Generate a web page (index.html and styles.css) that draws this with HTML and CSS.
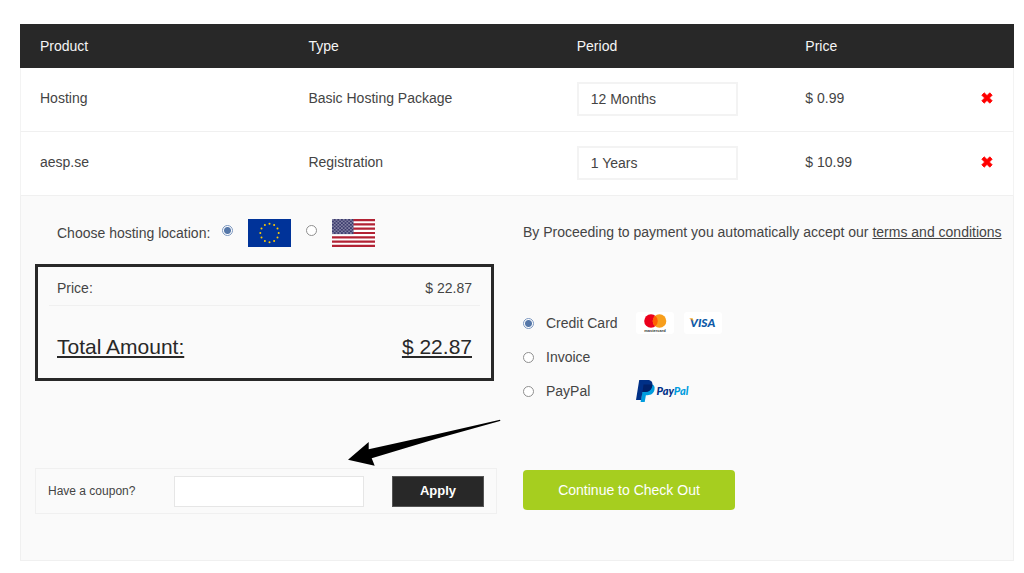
FILE: index.html
```html
<!DOCTYPE html>
<html lang="en">
<head>
  <meta charset="UTF-8">
  <meta name="viewport" content="width=device-width, initial-scale=1.0">
  <title>Shopping Cart</title>
  <link rel="stylesheet" href="styles.css">
</head>
<body>
  <svg class="defs" aria-hidden="true">
    <symbol id="icon-remove" viewBox="0 0 12 12">
      <path d="M3.2 .8 6 3.6 8.8 .8 11.2 3.2 8.4 6l2.8 2.8-2.4 2.4L6 8.4l-2.8 2.8L.8 8.8 3.6 6 .8 3.2z" fill="#f00" stroke="#f00" stroke-width=".8" stroke-linejoin="round"/>
    </symbol>
  </svg>

  <main class="cart">
    <table class="cart-table">
      <thead>
        <tr>
          <th class="col-product">Product</th>
          <th class="col-type">Type</th>
          <th class="col-period">Period</th>
          <th class="col-price">Price</th>
          <th class="col-remove"></th>
        </tr>
      </thead>
      <tbody>
        <tr>
          <td>Hosting</td>
          <td>Basic Hosting Package</td>
          <td><select class="period" aria-label="Hosting period"><option>12 Months</option></select></td>
          <td>$ 0.99</td>
          <td class="remove-cell"><button class="remove" type="button" aria-label="Remove Hosting"><svg><use href="#icon-remove"/></svg></button></td>
        </tr>
        <tr>
          <td>aesp.se</td>
          <td>Registration</td>
          <td><select class="period" aria-label="Registration period"><option>1 Years</option></select></td>
          <td>$ 10.99</td>
          <td class="remove-cell"><button class="remove" type="button" aria-label="Remove aesp.se"><svg><use href="#icon-remove"/></svg></button></td>
        </tr>
      </tbody>
    </table>

    <section class="checkout">
      <div class="location">
        <span>Choose hosting location:</span>
        <input type="radio" name="location" id="loc-eu" checked>
        <label for="loc-eu" aria-label="Europe">
          <svg class="flag" viewBox="0 0 43 28">
            <rect width="43" height="28" fill="#039"/>
            <g fill="#fc0">
              <circle cx="21.500" cy="4.800" r="1"/>
              <circle cx="26.100" cy="6" r="1"/>
              <circle cx="29.500" cy="9.400" r="1"/>
              <circle cx="30.700" cy="14" r="1"/>
              <circle cx="29.500" cy="18.600" r="1"/>
              <circle cx="26.100" cy="22" r="1"/>
              <circle cx="21.500" cy="23.200" r="1"/>
              <circle cx="16.900" cy="22" r="1"/>
              <circle cx="13.500" cy="18.600" r="1"/>
              <circle cx="12.300" cy="14" r="1"/>
              <circle cx="13.500" cy="9.400" r="1"/>
              <circle cx="16.900" cy="6" r="1"/>
            </g>
          </svg>
        </label>
        <input type="radio" name="location" id="loc-us">
        <label for="loc-us" aria-label="United States">
          <svg class="flag" viewBox="0 0 43 28">
            <defs>
              <pattern id="stars" width="3.600" height="3.300" patternUnits="userSpaceOnUse">
                <circle cx=".9" cy=".8" r=".6" fill="#fff"/>
                <circle cx="2.700" cy="2.450" r=".6" fill="#fff"/>
              </pattern>
            </defs>
            <rect width="43" height="28" fill="#fff"/>
            <path d="M0 1.080h43M0 5.390h43M0 9.690h43M0 14h43M0 18.310h43M0 22.620h43M0 26.920h43" stroke="#b22234" stroke-width="2.150"/>
            <rect width="21.500" height="15.100" fill="#3c3b6e"/>
            <rect width="21.500" height="15.100" fill="url(#stars)"/>
          </svg>
        </label>
      </div>

      <p class="terms">By Proceeding to payment you automatically accept our <a href="#">terms and conditions</a></p>

      <div class="summary">
        <div class="summary-row"><span>Price:</span><span>$ 22.87</span></div>
        <div class="summary-total"><span>Total Amount:</span><span>$ 22.87</span></div>
      </div>

      <div class="methods">
        <div class="method">
          <input type="radio" name="method" id="m-card" checked>
          <label for="m-card">Credit Card</label>
          <svg class="card-logo" viewBox="0 0 38 22" role="img" aria-label="Mastercard">
            <rect width="38" height="22" rx="3" fill="#fff"/>
            <circle cx="15" cy="9" r="6.800" fill="#eb001b"/>
            <circle cx="23.500" cy="9" r="6.800" fill="#f79e1b"/>
            <path d="M19.250 3.700a6.800 6.800 0 0 1 0 10.600 6.800 6.800 0 0 1 0-10.600z" fill="#ff5f00"/>
            <text x="19" y="19.500" class="mc-text">mastercard</text>
          </svg>
          <svg class="card-logo" viewBox="0 0 38 22" role="img" aria-label="Visa">
            <rect width="38" height="22" rx="3" fill="#fff"/>
            <text x="6" y="15" class="visa-text">VISA</text>
            <path d="M5 6.200h3.600l1.200 3.600C8.800 8.200 7.300 7 5 6.200z" fill="#f5a623"/>
          </svg>
        </div>
        <div class="method">
          <input type="radio" name="method" id="m-invoice">
          <label for="m-invoice">Invoice</label>
        </div>
        <div class="method">
          <input type="radio" name="method" id="m-paypal">
          <label for="m-paypal">PayPal</label>
          <svg class="paypal-logo" viewBox="0 0 58 22" role="img" aria-label="PayPal">
            <path d="M7.500 4.500h8c2.500 0 3.600 2 3 5-.7 4-3.400 5.700-7 5.700h-1.600L8.700 22H4.600z" fill="#009cde"/>
            <path d="M3.200 0h8.600c3.600 0 5.200 2.300 4.500 5.700-.8 4.300-3.500 6.300-7.400 6.300H6.500L5.100 20H0z" fill="#003087"/>
            <path d="M7.500 4.500h8.700l.2.600c-.7 4.700-3.400 6.900-7.500 6.900H6.500z" fill="#012169"/>
            <text x="20.500" y="15" class="paypal-text"><tspan fill="#003087">Pay</tspan><tspan fill="#009cde">Pal</tspan></text>
          </svg>
        </div>
      </div>

      <form class="coupon">
        <label for="coupon">Have a coupon?</label>
        <input type="text" id="coupon">
        <button type="button">Apply</button>
        <svg class="arrow" viewBox="0 0 154 50" aria-hidden="true">
          <path d="M0 41.700 20.700 24v7.300Q86 17 152 1.700q.8.800 0 1.200Q88 20 23.700 40.300l3 7.400z"/>
        </svg>
      </form>

      <button class="continue" type="button">Continue to Check Out</button>
    </section>
  </main>
</body>
</html>
```

FILE: styles.css
```css
* { box-sizing: border-box; }
body { margin: 0; background: #fff; color: #444; font: 14px/20px "Liberation Sans", Arial, sans-serif; }
button, input, select { font: inherit; color: inherit; margin: 0; }
svg { display: block; }
.defs { position: absolute; width: 0; height: 0; }

.cart { margin: 24px 10px 12px 20px; }

.cart-table { width: 100%; border-collapse: separate; border-spacing: 0; table-layout: fixed; }
.cart-table th { height: 44px; padding: 0 0 0 20px; background: #282828; color: #f5f5f5; font-weight: normal; text-align: left; }
.cart-table td { height: 64px; padding: 0 0 4px 20px; border-bottom: 1px solid #f0f0f0; }
.cart-table td:first-child { padding-left: 19px; border-left: 1px solid #f3f3f3; }
.cart-table td:last-child { border-right: 1px solid #f3f3f3; }
.col-product, .col-type { width: 27%; }
.col-period { width: 23%; }
.col-price { width: 15%; }

.period { display: block; width: 161px; height: 34px; margin-top: 3px; padding: 0 12px; border: 2px solid #f3f3f3; border-radius: 0; background: #fff; appearance: none; }
.cart-table .remove-cell { padding-right: 20px; }
.remove { display: block; margin-left: auto; padding: 0; border: 0; background: none; cursor: pointer; }
.remove svg { width: 12px; height: 12px; }

.checkout {
  display: grid;
  grid-template-columns: minmax(0, 462fr) minmax(0, 476fr);
  column-gap: 26px;
  padding: 23px 14px 46px;
  background: #fafafa;
  border: 1px solid #f0f0f0;
  border-top: 0;
}

input[type=radio] { flex: none; width: 11px; height: 11px; border: 1px solid #8f8f8f; border-radius: 50%; background: #fff; appearance: none; }
input[type=radio]:checked { border-color: #7a96bf; background: radial-gradient(circle, #5577a8 3px, #fff 4px); }

.location { display: flex; align-items: center; height: 28px; padding-left: 22px; }
.location input { margin: 0 15px 6px 12px; }
.location label + input { margin-left: 15px; }
.flag { width: 43px; height: 28px; }

.terms { margin: 0; line-height: 26px; white-space: nowrap; }
.terms a { color: #444; }

.summary { align-self: start; margin: 17px 3px 0 0; padding: 0 11px; border: 3px solid #282828; }
.summary-row { display: flex; justify-content: space-between; height: 39px; padding: 11px 8px; border-bottom: 1px solid #f0f0f0; }
.summary-total { display: flex; justify-content: space-between; height: 72px; padding: 28px 8px; color: #282828; font-size: 21px; line-height: 26px; }
.summary-total span { text-decoration: underline; }

.methods { margin-top: 59px; }
.method { display: flex; align-items: center; height: 34px; }
.method label { width: 90px; margin-left: 12px; }
.card-logo { width: 38px; height: 22px; margin-right: 10px; }
.paypal-logo { width: 58px; height: 22px; overflow: visible; }
.mc-text { font: bold 4px "Liberation Sans", sans-serif; fill: #333; text-anchor: middle; }
.visa-text { font: italic 900 12px Lato, sans-serif; fill: #0e5aa7; }
.paypal-text { font: italic 900 11px Lato, sans-serif; }

.coupon { position: relative; display: flex; align-items: center; height: 46px; margin-top: 60px; padding: 0 12px; border: 1px solid #f0f0f0; font-size: 12px; }
.coupon label { width: 126px; }
.coupon input { flex: 1; min-width: 0; height: 31px; padding: 0 8px; border: 1px solid #e6e6e6; background: #fff; }
.coupon button { width: 92px; height: 31px; margin-left: 28px; padding: 0; border: 1px solid #555; background: #282828; color: #fff; font-size: 13px; font-weight: bold; }
.arrow { position: absolute; left: 312px; top: -51px; width: 154px; height: 50px; }

.continue { justify-self: start; width: 212px; height: 40px; margin-top: 62px; padding: 0; border: 0; border-radius: 4px; background: #a6ce1f; color: #fff; }
```
